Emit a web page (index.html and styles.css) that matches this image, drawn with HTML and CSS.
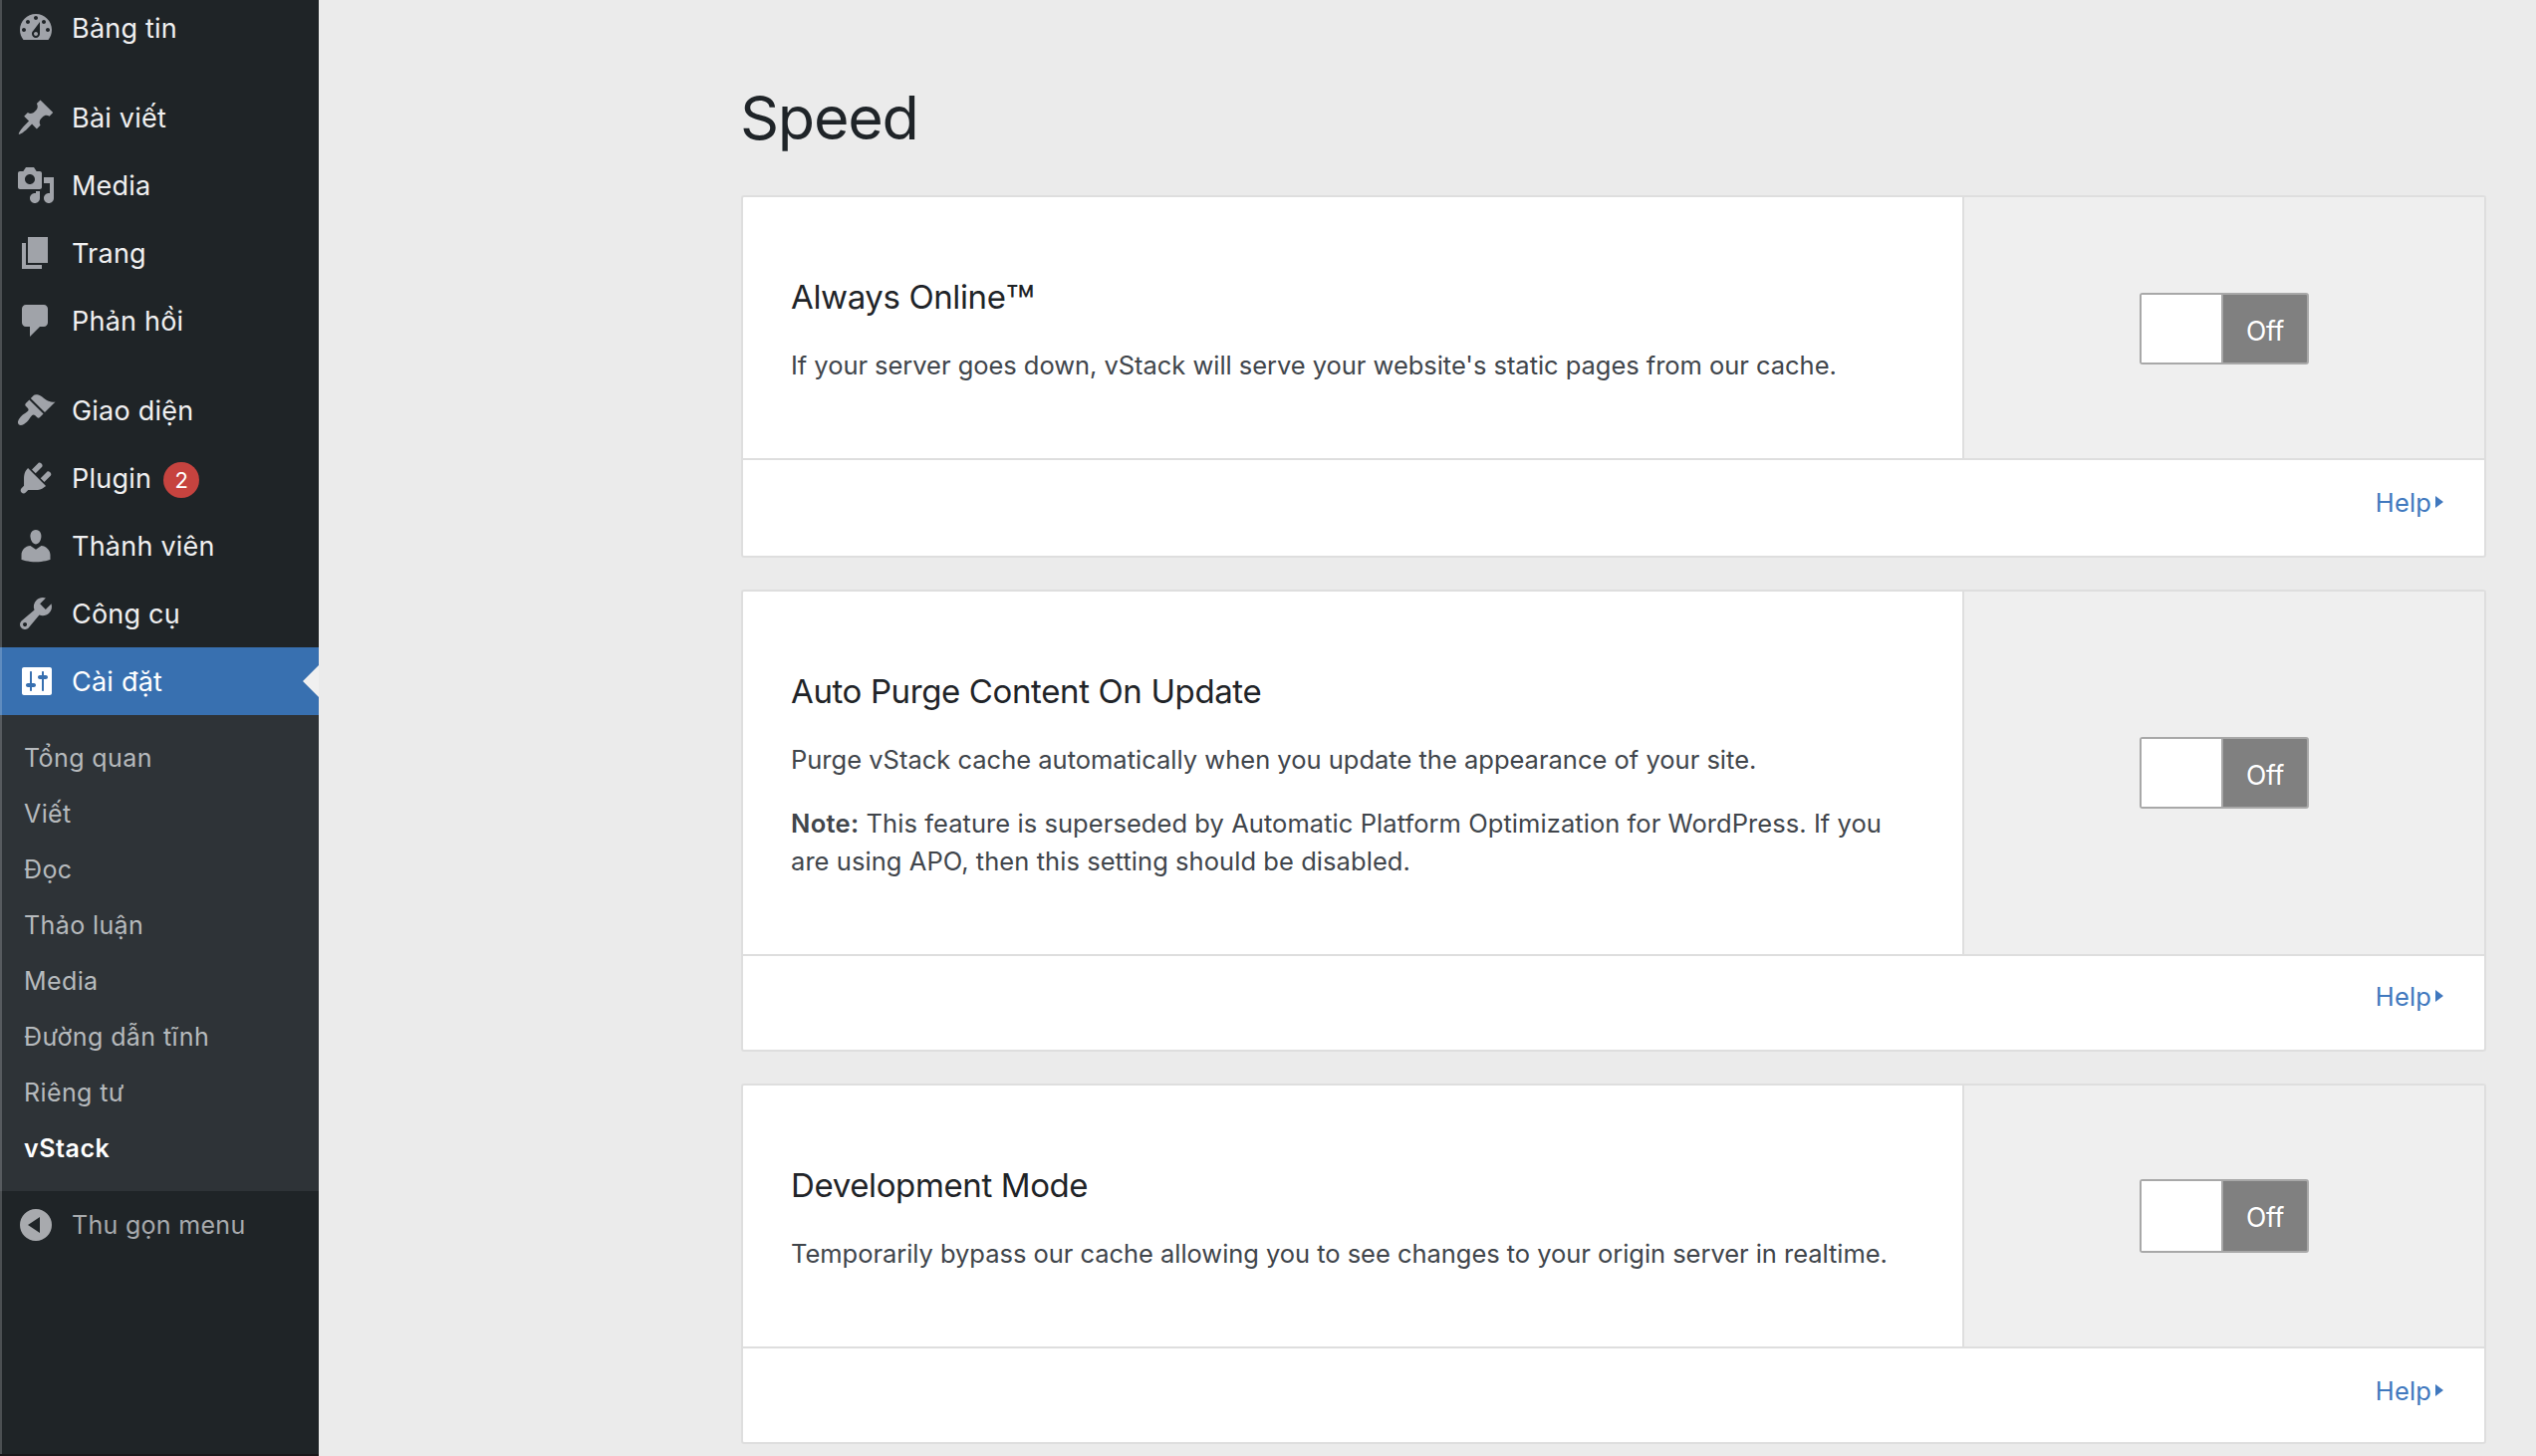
FILE: index.html
```
<!DOCTYPE html>
<html lang="vi">
<head>
<meta charset="utf-8">
<title>Speed</title>
<link rel="stylesheet" href="styles.css">
</head>
<body>
<div class="page">
  <nav class="sidebar">
    <ul class="menu">
      <li class="menu-item"><svg class="icon" viewBox="0 0 20 20"><path d="M3.76 16h12.48c1.1-1.37 1.76-3.11 1.76-5 0-4.42-3.58-8-8-8s-8 3.58-8 8c0 1.89.66 3.63 1.76 5zM10 4c.55 0 1 .45 1 1s-.45 1-1 1-1-.45-1-1 .45-1 1-1zM6 6c.55 0 1 .45 1 1s-.45 1-1 1-1-.45-1-1 .45-1 1-1zm8 0c.55 0 1 .45 1 1s-.45 1-1 1-1-.45-1-1 .45-1 1-1zm-5.37 5.55L12 7v6c0 1.1-.9 2-2 2s-2-.9-2-2c0-.57.24-1.08.63-1.45zM4 10c.55 0 1 .45 1 1s-.45 1-1 1-1-.45-1-1 .45-1 1-1zm12 0c.55 0 1 .45 1 1s-.45 1-1 1-1-.45-1-1 .45-1 1-1zm-5 3c0-.55-.45-1-1-1s-1 .45-1 1 .45 1 1 1 1-.45 1-1z"/></svg><span>Bảng tin</span></li>
      <li class="separator"></li>
      <li class="menu-item"><svg class="icon" viewBox="0 0 20 20"><path d="M10.44 3.02l1.82-1.82 6.36 6.35-1.83 1.82c-1.05-.68-2.48-.57-3.41.36l-.75.75c-.92.93-1.04 2.35-.35 3.41l-1.83 1.82-2.41-2.41-2.8 2.79c-.42.42-3.38 2.71-3.8 2.29s1.86-3.39 2.28-3.81l2.79-2.79L4.1 9.36l1.83-1.82c1.05.69 2.48.57 3.4-.36l.75-.75c.93-.92 1.05-2.35.36-3.41z"/></svg><span>Bài viết</span></li>
      <li class="menu-item"><svg class="icon" viewBox="0 0 20 20"><path d="M13 11V4c0-.55-.45-1-1-1h-1.67L9 1H5L3.67 3H2c-.55 0-1 .45-1 1v7c0 .55.45 1 1 1h10c.55 0 1-.45 1-1zM7 4.5c1.38 0 2.5 1.12 2.5 2.5S8.38 9.5 7 9.5 4.5 8.38 4.5 7 5.62 4.5 7 4.5zM14 6h5v10.5c0 1.38-1.12 2.5-2.5 2.5S14 17.88 14 16.5s1.12-2.5 2.5-2.5c.17 0 .34.02.5.05V9h-3V6zm-4 8.05V13h2v3.5c0 1.38-1.12 2.5-2.5 2.5S7 17.88 7 16.5 8.12 14 9.5 14c.17 0 .34.02.5.05z"/></svg><span>Media</span></li>
      <li class="menu-item"><svg class="icon" viewBox="0 0 20 20"><path d="M6 15V2h10v13H6zm-1 1h8v2H3V5h2v11z"/></svg><span>Trang</span></li>
      <li class="menu-item"><svg class="icon" viewBox="0 0 20 20"><path d="M5 2h9c1.1 0 2 .9 2 2v7c0 1.1-.9 2-2 2h-2l-5 5v-5H5c-1.1 0-2-.9-2-2V4c0-1.1.9-2 2-2z"/></svg><span>Phản hồi</span></li>
      <li class="separator"></li>
      <li class="menu-item"><svg class="icon" viewBox="0 0 20 20"><path d="M14.48 11.06L7.41 3.99l1.5-1.5c.5-.56 2.3-.47 3.51.32 1.21.8 1.43 1.28 2.91 2.1 1.18.64 2.45 1.26 4.45.85zm-.71.71L6.7 4.7 4.93 6.47c-.39.39-.39 1.02 0 1.41l1.06 1.06c.39.39.39 1.03 0 1.42-.6.6-1.43 1.11-2.21 1.69-.35.26-.7.53-1.01.84C1.43 14.23.4 16.08 1.4 17.07c.99 1 2.84-.03 4.18-1.36.31-.31.58-.66.85-1.02.57-.78 1.08-1.61 1.69-2.21.39-.39 1.02-.39 1.41 0l1.06 1.06c.39.39 1.02.39 1.41 0z"/></svg><span>Giao diện</span></li>
      <li class="menu-item"><svg class="icon" viewBox="0 0 20 20"><path d="M13.11 4.36L9.87 7.6 8 5.73l3.24-3.24c.35-.34 1.05-.2 1.56.32.52.51.66 1.21.31 1.55zm-8 1.77l.91-1.12 9.01 9.01-1.19.84c-.71.71-2.63 1.16-3.82 1.16H6.14L4.9 17.26c-.59.59-1.54.59-2.12 0-.59-.58-.59-1.53 0-2.12l1.24-1.24v-3.88c0-1.13.4-3.19 1.09-3.89zm7.26 3.97l3.24-3.24c.34-.35 1.04-.21 1.55.31.52.51.66 1.21.31 1.55l-3.24 3.25z"/></svg><span>Plugin</span><span class="count">2</span></li>
      <li class="menu-item"><svg class="icon" viewBox="0 0 20 20"><path d="M10 9.25c-2.27 0-2.73-3.44-2.73-3.44C7 4.02 7.82 2 9.97 2c2.16 0 2.98 2.02 2.71 3.81 0 0-.41 3.44-2.68 3.44zm0 2.57L12.72 10c2.39 0 4.52 2.33 4.52 4.53v2.49s-3.65 1.13-7.24 1.13c-3.65 0-7.24-1.13-7.24-1.13v-2.49c0-2.25 1.94-4.48 4.47-4.48z"/></svg><span>Thành viên</span></li>
      <li class="menu-item"><svg class="icon" viewBox="0 0 20 20"><path d="M16.68 9.77c-1.34 1.34-3.3 1.67-4.95.99l-5.41 6.52c-.99.99-2.59.99-3.58 0s-.99-2.59 0-3.57l6.52-5.42c-.68-1.65-.35-3.61.99-4.95 1.28-1.28 3.12-1.62 4.72-1.06l-2.89 2.89 2.82 2.82 2.86-2.87c.53 1.58.18 3.39-1.08 4.65zM3.81 16.21c.4.39 1.04.39 1.43 0 .4-.4.4-1.04 0-1.43-.39-.4-1.03-.4-1.43 0-.39.39-.39 1.03 0 1.43z"/></svg><span>Công cụ</span></li>
      <li class="menu-item current"><svg class="icon" viewBox="0 0 20 20"><path d="M18 16V4c0-.55-.45-1-1-1H4c-.55 0-1 .45-1 1v12c0 .55.45 1 1 1h13c.55 0 1-.45 1-1zM8 11h1c.55 0 1 .45 1 1s-.45 1-1 1H8v1.5c0 .28-.22.5-.5.5s-.5-.22-.5-.5V13H6c-.55 0-1-.45-1-1s.45-1 1-1h1V5.5c0-.28.22-.5.5-.5s.5.22.5.5V11zm5-2h-1c-.55 0-1-.45-1-1s.45-1 1-1h1V5.5c0-.28.22-.5.5-.5s.5.22.5.5V7h1c.55 0 1 .45 1 1s-.45 1-1 1h-1v5.5c0 .28-.22.5-.5.5s-.5-.22-.5-.5V9z"/></svg><span>Cài đặt</span></li>
    </ul>
    <ul class="submenu">
      <li>Tổng quan</li>
      <li>Viết</li>
      <li>Đọc</li>
      <li>Thảo luận</li>
      <li>Media</li>
      <li>Đường dẫn tĩnh</li>
      <li>Riêng tư</li>
      <li class="active">vStack</li>
    </ul>
    <div class="menu-item collapse"><svg class="icon" viewBox="0 0 20 20"><path fill-rule="evenodd" d="M10 2a8 8 0 1 0 0 16a8 8 0 1 0 0-16zM12 6v8l-6-4z"/></svg><span>Thu gọn menu</span></div>
  </nav>

  <main class="content">
    <h1>Speed</h1>

    <section class="card">
      <div class="card-body">
        <div class="card-text">
          <h2>Always Online<span class="tm">™</span></h2>
          <p>If your server goes down, vStack will serve your website's static pages from our cache.</p>
        </div>
        <div class="card-control"><div class="toggle"><span class="knob"></span><span class="state">Off</span></div></div>
      </div>
      <div class="card-footer"><a class="help">Help<span class="caret"></span></a></div>
    </section>

    <section class="card purge">
      <div class="card-body">
        <div class="card-text">
          <h2>Auto Purge Content On Update</h2>
          <p>Purge vStack cache automatically when you update the appearance of your site.</p>
          <p class="note"><b>Note:</b> This feature is superseded by Automatic Platform Optimization for WordPress. If you<br>are using APO, then this setting should be disabled.</p>
        </div>
        <div class="card-control"><div class="toggle"><span class="knob"></span><span class="state">Off</span></div></div>
      </div>
      <div class="card-footer"><a class="help">Help<span class="caret"></span></a></div>
    </section>

    <section class="card devmode">
      <div class="card-body">
        <div class="card-text">
          <h2>Development Mode</h2>
          <p>Temporarily bypass our cache allowing you to see changes to your origin server in realtime.</p>
        </div>
        <div class="card-control"><div class="toggle"><span class="knob"></span><span class="state">Off</span></div></div>
      </div>
      <div class="card-footer"><a class="help">Help<span class="caret"></span></a></div>
    </section>
  </main>
</div>
</body>
</html>
```
FILE: styles.css
```
* { box-sizing: border-box; }

body {
  margin: 0;
  background: #ebebeb;
  font-family: Inter, "Liberation Sans", sans-serif;
}

ul { list-style: none; margin: 0; padding: 0; }

.page {
  display: flex;
  height: 1462px;
  overflow: hidden;
}

/* Sidebar */
.sidebar {
  position: relative;
  flex: none;
  width: 320px;
  background: #1f2427;
  border-bottom: 2px solid #1a181b;
}

/* window edge highlight */
.sidebar::before {
  content: "";
  position: absolute;
  z-index: 1;
  inset: 0 auto 0 0;
  width: 2px;
  background: rgba(255, 255, 255, .2);
}

.menu { margin-top: -6px; }

.menu-item {
  position: relative;
  display: flex;
  align-items: center;
  height: 68px;
  padding-left: 16px;
  color: #f0f0f1;
  font-size: 27px;
  letter-spacing: .22px;
}

.separator { height: 22px; }

.icon {
  flex: none;
  width: 40px;
  height: 40px;
  margin-right: 16px;
  fill: #a0a3a9;
}

.count {
  display: flex;
  align-items: center;
  justify-content: center;
  width: 36px;
  height: 36px;
  margin: 4px 0 0 12px;
  border-radius: 50%;
  background: #c6433f;
  color: #fff;
  font-size: 22px;
  letter-spacing: 0;
}

.current { background: #3870b0; color: #fff; }
.current .icon { fill: #fff; }

.current::after {
  content: "";
  position: absolute;
  right: 0;
  top: 18px;
  border: 16px solid transparent;
  border-left-width: 0;
  border-right-color: #f0f0f0;
}

.submenu {
  padding: 15px 24px;
  background: #2e3337;
  color: #b6babd;
  font-size: 25px;
  letter-spacing: .4px;
  line-height: 56px;
}

.submenu .active { color: #fff; font-weight: 600; letter-spacing: .55px; }

.collapse { color: #a7aaad; font-size: 25px; letter-spacing: .3px; }
.collapse .icon { fill: #a8aaae; }

/* Content */
.content {
  flex: 1;
  display: flex;
  flex-direction: column;
  padding: 78px 50px 0 424px;
}

h1 {
  margin: 0 0 38px -1px;
  color: #1f2428;
  font-size: 61px;
  font-weight: 400;
  letter-spacing: -1.3px;
  line-height: 80px;
}

.card {
  flex: none;
  margin-bottom: 32px;
  border: 2px solid #dedede;
  border-radius: 3px;
  background: #fff;
}

.card-body {
  display: flex;
  height: 264px;
  border-bottom: 2px solid #dedede;
}

.purge .card-body { height: 366px; }

.card-text { flex: 1; padding: 78px 0 0 48px; }

h2 {
  margin: 0 0 28px;
  color: #1f2428;
  font-size: 33px;
  font-weight: 400;
  letter-spacing: -.38px;
  line-height: 44px;
}

.tm {
  font-size: 48px;
  line-height: 0;
  vertical-align: -11px;
}

p {
  margin: 0 0 26px;
  color: #40454b;
  font-size: 25.5px;
  letter-spacing: -.04px;
  line-height: 38px;
  white-space: nowrap;
}

.purge p { letter-spacing: 0; }
.purge .note { letter-spacing: .06px; }
.note b { font-weight: 600; letter-spacing: .3px; }

.card-control {
  display: flex;
  align-items: center;
  justify-content: center;
  width: 524px;
  border-left: 2px solid #dedede;
  background: #efefef;
}

.toggle {
  display: flex;
  width: 170px;
  height: 72px;
  border: 2px solid #a8a8a8;
  border-radius: 3px;
  background: #808080;
}

.card:not(.purge, .devmode) .toggle { margin-top: 2px; }
.devmode .toggle { height: 74px; }

.knob {
  width: 82px;
  border-right: 2px solid #a8a8a8;
  background: #fff;
}

.state {
  flex: 1;
  padding-top: 2px;
  color: #fff;
  font-size: 26.5px;
  letter-spacing: -.3px;
  line-height: 68px;
  text-align: center;
}

.card-footer {
  display: flex;
  justify-content: flex-end;
  height: 96px;
  padding: 24px 41px 0 0;
}

.purge .card-footer,
.devmode .card-footer { height: 94px; }
.purge .card-footer { padding-top: 22px; }

.help {
  display: flex;
  height: 38px;
  color: #4078be;
  font-size: 25.5px;
  letter-spacing: .15px;
  line-height: 38px;
}

.caret {
  align-self: flex-start;
  margin: 12px 0 0 4px;
  border: 6px solid transparent;
  border-left: 8px solid #4078be;
  border-right: 0;
}
```
